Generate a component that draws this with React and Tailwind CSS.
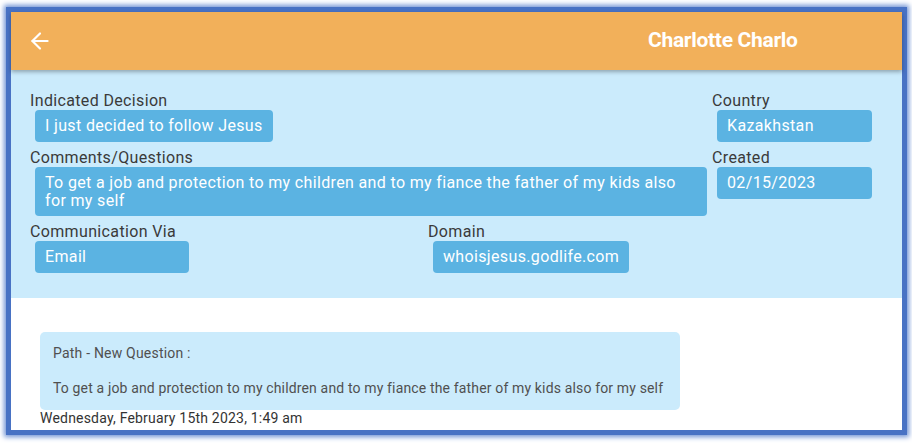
import { ArrowLeft } from "lucide-react";

function Field({ label, value, className = "", pill = "" }) {
  return (
    <div className={className}>
      <div className="text-[16px] leading-[19px] tracking-[0.35px] text-[#3a3a3a]">{label}</div>
      <div
        className={`ml-[5px] rounded-[4px] bg-[#5bb3e2] px-[10px] py-[6px] text-[16px] leading-[20px] tracking-[0.35px] text-white ${pill}`}
      >
        {value}
      </div>
    </div>
  );
}

export default function App() {
  return (
    <div className="h-[443px] w-[912px] overflow-hidden bg-white pl-[6px] pt-[7px] font-['Roboto',sans-serif]">
      <div className="h-[428px] w-[901px] border-[5px] border-[#4872c4] shadow-[0_0_5px_2px_#6f92d4]">
        <div className="relative z-10 flex h-[58px] items-center bg-[#f2b05a] shadow-[0_2px_4px_rgba(0,0,0,0.3)]">
          <ArrowLeft className="ml-[16px] h-[26px] w-[26px] text-white" strokeWidth={2} />
          <div className="ml-[595px] text-[21px] font-bold tracking-[-0.3px] text-white">
            Charlotte Charlo
          </div>
        </div>

        <div className="flex h-[228px] bg-[#cbebfc] pl-[19px] pt-[21px]">
          <div className="w-[682px]">
            <Field label="Indicated Decision" value="I just decided to follow Jesus" pill="w-fit" />
            <Field
              className="mt-[6px]"
              label="Comments/Questions"
              value="To get a job and protection to my children and to my fiance the father of my kids also for my self"
              pill="w-[672px] !leading-[18px] !py-[6.5px]"
            />
            <div className="mt-[6px] flex">
              <Field className="w-[398px]" label="Communication Via" value="Email" pill="w-[154px]" />
              <Field label="Domain" value="whoisjesus.godlife.com" pill="w-fit" />
            </div>
          </div>
          <div>
            <Field label="Country" value="Kazakhstan" pill="w-[155px]" />
            <Field className="mt-[6px]" label="Created" value="02/15/2023" pill="w-[155px]" />
          </div>
        </div>

        <div className="pl-[29px] pt-[34px]">
          <div className="h-[78px] w-[640px] rounded-[5px] bg-[#cbebfc] px-[13px] pt-[12px] text-[14px] text-[#505050]">
            <div className="leading-[18px] tracking-[0.2px]">Path - New Question :</div>
            <div className="mt-[17px] whitespace-nowrap leading-[18px] tracking-[0.15px]">
              To get a job and protection to my children and to my fiance the father of my kids also for my self
            </div>
          </div>
          <div className="text-[14px] leading-[17px] tracking-[0.2px] text-[#333]">
            Wednesday, February 15th 2023, 1:49 am
          </div>
        </div>
      </div>
    </div>
  );
}
